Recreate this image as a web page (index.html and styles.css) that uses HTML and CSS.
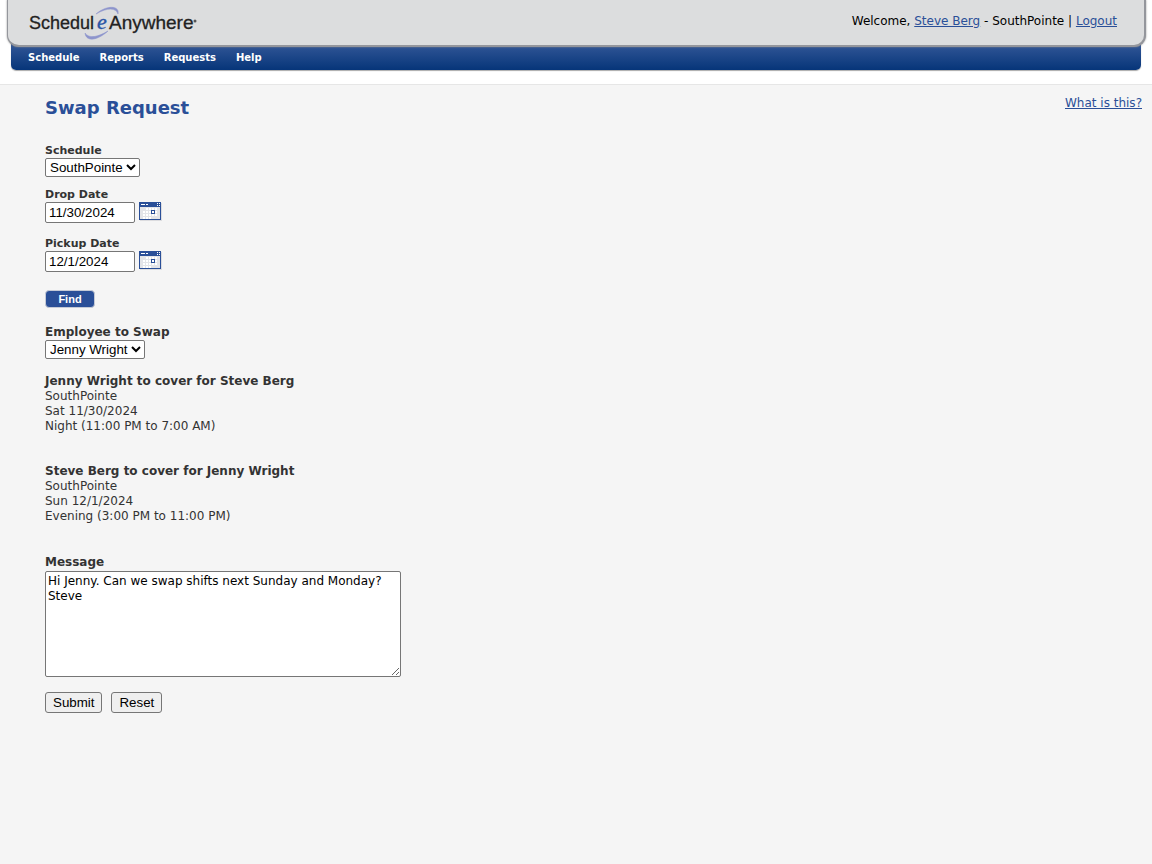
FILE: index.html
```html
<!DOCTYPE html>
<html lang="en">
<head>
<meta charset="utf-8">
<title>Swap Request - ScheduleAnywhere</title>
<link rel="stylesheet" href="styles.css">
</head>
<body>
<header class="masthead">
  <div class="banner">
    <a class="logo" href="#" aria-label="ScheduleAnywhere">
      <svg class="logo-art" viewBox="0 0 172 36" role="img" aria-hidden="true">
        <path d="M67 9C77 0 91 0 89 9C87 3 79 2 67 9Z" fill="#8d94cc" stroke="#8d94cc" stroke-width=".5"/>
        <path d="M56 28C57 37 68 36 79 26C69 32 60 34 56 28Z" fill="#8d94cc" stroke="#8d94cc" stroke-width=".5"/>
        <text class="logo-word logo-first" x="0" y="24">Schedul</text>
        <text class="logo-e" x="68" y="24">e</text>
        <text class="logo-word" x="80" y="24">Anywhere</text>
        <circle cx="166" cy="16" r="1.5" fill="#555"/>
      </svg>
    </a>
    <div class="account">Welcome, <a href="#">Steve Berg</a> - SouthPointe | <a href="#">Logout</a></div>
  </div>
  <nav class="menu">
    <a href="#">Schedule</a>
    <a href="#">Reports</a>
    <a href="#">Requests</a>
    <a href="#">Help</a>
  </nav>
</header>
<main class="content">
  <div class="title-row">
    <h1>Swap Request</h1>
    <a href="#">What is this?</a>
  </div>
  <form class="form">
    <div class="field schedule">
      <label for="schedule">Schedule</label>
      <select id="schedule"><option>SouthPointe</option></select>
    </div>
    <div class="field drop">
      <label for="drop">Drop Date</label>
      <div class="date-row">
        <input id="drop" type="text" value="11/30/2024">
        <button class="calendar" type="button" aria-label="Choose drop date">
          <svg viewBox="0 0 23 20" shape-rendering="crispEdges"><path fill="#dcdcdf" d="M1 1h22v18H1z"/><path fill="#2a4f98" d="M0 0h22v18H0z"/><path fill="#e3e4e8" d="M1 5h20v12H1z"/><path fill="#fff" d="M2 2h4v1H2zM7 2h2v1H7zM18 1h1v1h-1zM20 1h1v1h-1zM18 3h1v1h-1zM20 3h1v1h-1zM7 6h2v2H7zM10 6h2v2h-2zM13 6h2v2h-2zM16 6h2v2h-2zM4 9h2v2H4zM7 9h2v2H7zM10 9h2v2h-2zM16 9h2v2h-2zM4 12h2v2H4zM7 12h2v2H7zM10 12h2v2h-2zM13 12h2v2h-2zM16 12h2v2h-2zM4 15h2v2H4zM7 15h2v2H7zM10 15h2v2h-2z"/><path fill="#2a4f98" d="M12 8h4v4h-4z"/><path fill="#fff" d="M13 9h2v2h-2z"/></svg>
        </button>
      </div>
    </div>
    <div class="field pickup">
      <label for="pickup">Pickup Date</label>
      <div class="date-row">
        <input id="pickup" type="text" value="12/1/2024">
        <button class="calendar" type="button" aria-label="Choose pickup date">
          <svg viewBox="0 0 23 20" shape-rendering="crispEdges"><path fill="#dcdcdf" d="M1 1h22v18H1z"/><path fill="#2a4f98" d="M0 0h22v18H0z"/><path fill="#e3e4e8" d="M1 5h20v12H1z"/><path fill="#fff" d="M2 2h4v1H2zM7 2h2v1H7zM18 1h1v1h-1zM20 1h1v1h-1zM18 3h1v1h-1zM20 3h1v1h-1zM7 6h2v2H7zM10 6h2v2h-2zM13 6h2v2h-2zM16 6h2v2h-2zM4 9h2v2H4zM7 9h2v2H7zM10 9h2v2h-2zM16 9h2v2h-2zM4 12h2v2H4zM7 12h2v2H7zM10 12h2v2h-2zM13 12h2v2h-2zM16 12h2v2h-2zM4 15h2v2H4zM7 15h2v2H7zM10 15h2v2h-2z"/><path fill="#2a4f98" d="M12 8h4v4h-4z"/><path fill="#fff" d="M13 9h2v2h-2z"/></svg>
        </button>
      </div>
    </div>
    <button class="find" type="button">Find</button>
    <div class="field employee large">
      <label for="employee">Employee to Swap</label>
      <select id="employee"><option>Jenny Wright</option></select>
    </div>
    <section class="shift">
      <h2>Jenny Wright to cover for Steve Berg</h2>
      <p>SouthPointe</p>
      <p>Sat 11/30/2024</p>
      <p>Night (11:00 PM to 7:00 AM)</p>
    </section>
    <section class="shift">
      <h2>Steve Berg to cover for Jenny Wright</h2>
      <p>SouthPointe</p>
      <p>Sun 12/1/2024</p>
      <p>Evening (3:00 PM to 11:00 PM)</p>
    </section>
    <div class="field large">
      <label for="message">Message</label>
      <textarea id="message">Hi Jenny. Can we swap shifts next Sunday and Monday?
Steve</textarea>
    </div>
    <div class="actions">
      <button type="submit">Submit</button>
      <button type="reset">Reset</button>
    </div>
  </form>
</main>
</body>
</html>
```
FILE: styles.css
```css
* { box-sizing: border-box; }
body {
  margin: 0;
  min-height: 100vh;
  display: flex;
  flex-direction: column;
  background: #f5f5f5;
  color: #333;
  font: 12px/15px Verdana, "DejaVu Sans", sans-serif;
}
a { color: #2a4f98; }
.masthead {
  background: #fff;
  padding: 0 6px 14px 7px;
  border-bottom: 1px solid #e6e6e6;
}
.banner {
  position: relative;
  display: flex;
  justify-content: space-between;
  height: 47px;
  padding: 0 27px 0 21px;
  background: #dcddde;
  border: solid #94969c;
  border-width: 0 2px 2px 1px;
  border-radius: 0 0 12px 12px;
  box-shadow: 0 0 2px #888;
}
.logo { padding-top: 5px; }
.logo-art { display: block; width: 172px; height: 36px; overflow: visible; }
.logo-word { font: 19px "Liberation Sans", Arial, sans-serif; fill: #222; stroke: #222; stroke-width: .3px; }
.logo-first { font-size: 18px; }
.logo-e { font: italic 22px "Liberation Serif", serif; fill: #2a55a5; stroke: #2a55a5; stroke-width: .4px; }
.account { padding-top: 14px; color: #000; }
.menu {
  display: flex;
  gap: 20px;
  height: 32px;
  margin: -9px 5px 0 4px;
  padding: 12px 17px 0;
  background: linear-gradient(#2c5293 30%, #063579);
  border-radius: 0 0 5px 5px;
  box-shadow: 0 1px 1px #aaa;
}
.menu a { color: #fff; font-size: 10px; font-weight: bold; text-decoration: none; }
.content { padding: 10px 10px 20px 45px; }
.title-row { display: flex; justify-content: space-between; }
.title-row a { padding-top: 1px; }
h1 { margin: 0; color: #2a4f98; font-size: 18px; line-height: 26px; }
.form { display: flex; flex-direction: column; align-items: flex-start; padding-top: 22px; }
.field { display: flex; flex-direction: column; align-items: flex-start; }
label { font-size: 11px; font-weight: bold; line-height: 15px; }
.large label { font-size: 12px; line-height: 16px; }
select, input, .actions button { font-family: "Liberation Sans", Arial, sans-serif; color: #000; }
select { height: 19px; padding: 0; border: 1px solid #767676; border-radius: 2px; background: #fff; }
input { width: 90px; height: 21px; padding: 1px 3px; border: 1px solid #767676; border-radius: 2px; background: #fff; }
.date-row { display: flex; align-items: flex-start; gap: 4px; }
.calendar { padding: 0; border: 0; background: none; }
.calendar svg { display: block; width: 23px; height: 20px; }
.schedule { margin-bottom: 10px; }
.drop { margin-bottom: 13px; }
.pickup { margin-bottom: 18px; }
.find {
  width: 50px;
  height: 18px;
  margin-bottom: 15px;
  padding: 0;
  border: 1px solid #c5cad6;
  border-radius: 4px;
  background: #2a4f98;
  color: #fff;
  font: bold 11px "Liberation Sans", Arial, sans-serif;
}
.employee { margin-bottom: 15px; }
.employee label { padding-top: 1px; }
.shift { margin-bottom: 30px; }
h2 { margin: 0; font-size: 12px; line-height: 15px; }
p { margin: 0; }
textarea {
  width: 356px;
  height: 106px;
  margin-top: 1px;
  padding: 2px;
  border: 1px solid #767676;
  border-radius: 2px;
  color: #000;
  font: inherit;
  line-height: 15px;
}
.actions { display: flex; gap: 9px; margin-top: 15px; }
.actions button { height: 21px; padding: 1px 7px; border: 1px solid #767676; border-radius: 3px; background: #efefef; }
```
